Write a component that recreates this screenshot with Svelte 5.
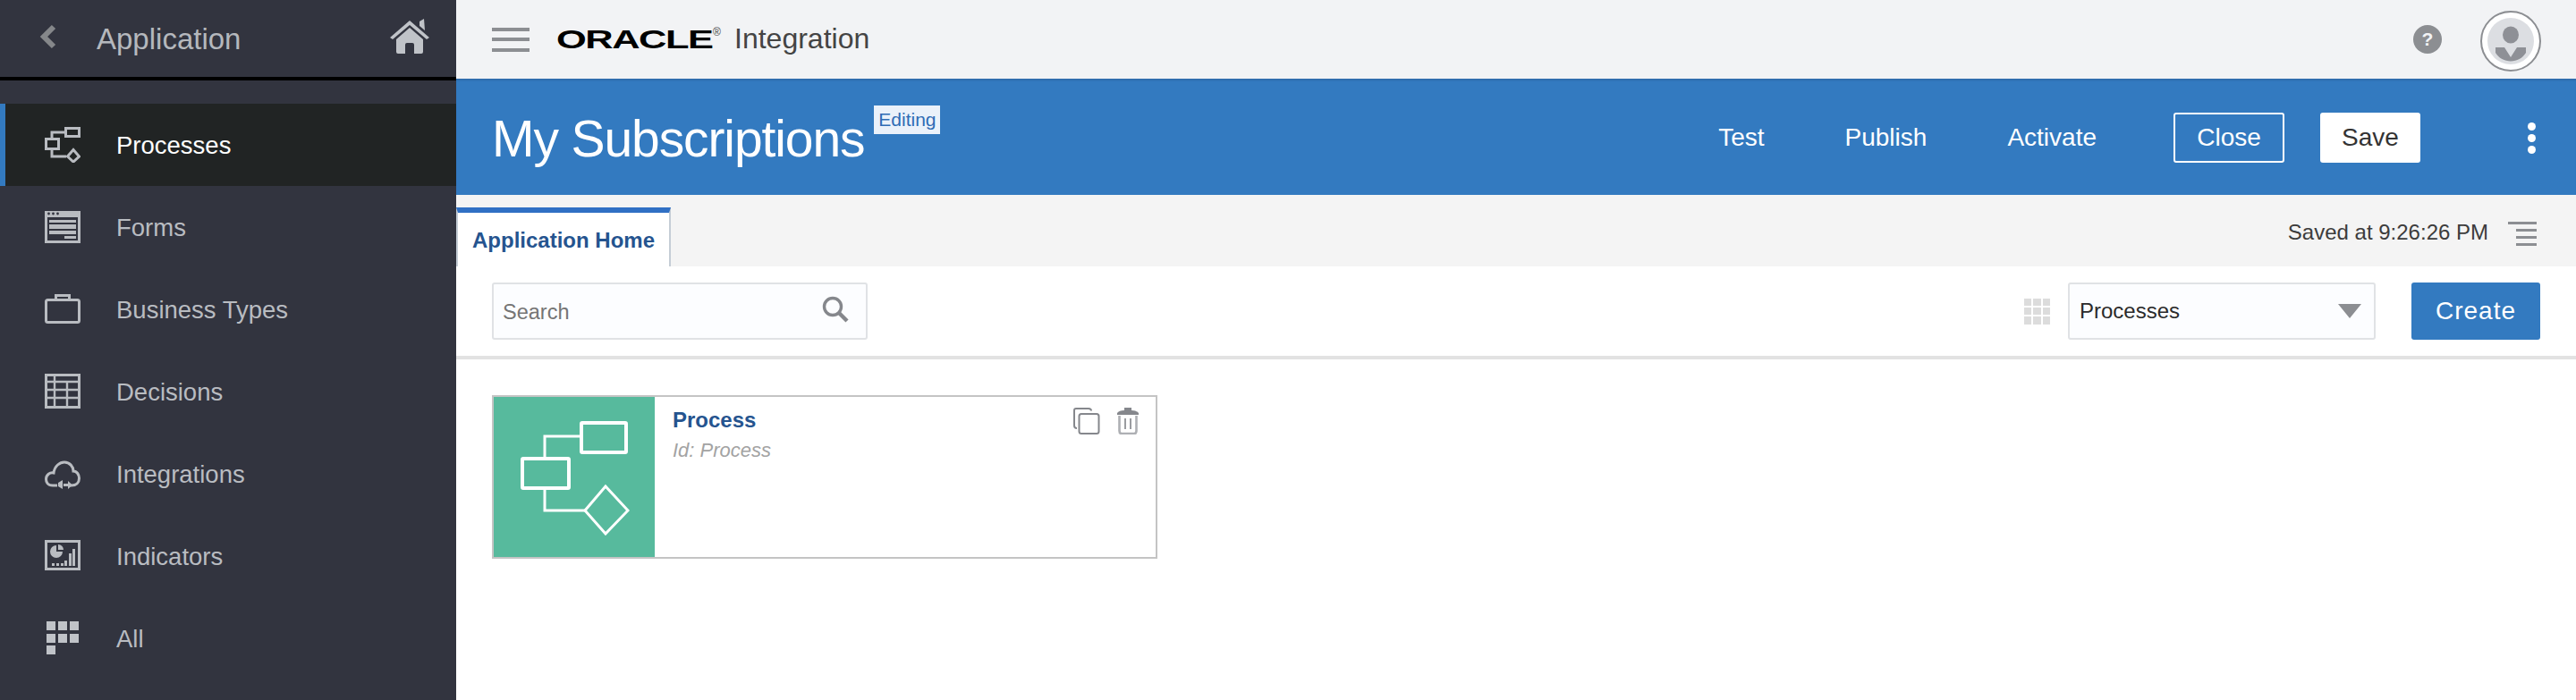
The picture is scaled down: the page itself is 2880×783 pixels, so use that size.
<script>
  const items = ['Processes','Forms','Business Types','Decisions','Integrations','Indicators','All'];
</script>

<div class="page">
  <aside class="side">
    <div class="side-head">
      <svg class="back" width="20" height="28" viewBox="0 0 20 28"><path d="M16 3 L5 14 L16 25" fill="none" stroke="#85878a" stroke-width="6"/></svg>
      <span class="app-name">Application</span>
      <svg class="home" width="44" height="40" viewBox="0 0 44 40"><path d="M0 21 L22 2 L44 21 L41 23 L22 7 L3 23Z M33 3 L38 0 L39 13 L33 8Z" fill="#c0c3c8"/><path d="M7 23 L22 10 L37 23 V37 Q37 39 35 39 H27 V29 Q27 27 25 27 H19 Q17 27 17 29 V39 H9 Q7 39 7 37Z" fill="#c0c3c8"/></svg>
    </div>
    <nav class="nav">
      {#each items as item, i}
        <div class="row" class:active={i === 0}>
          <svg class="ico" width="40" height="40" viewBox="0 0 40 40">
            {#if i === 0}
              <g fill="none" stroke="#b9bcc1" stroke-width="3">
                <rect x="23.5" y="1.5" width="15" height="9"/><rect x="1.5" y="13.5" width="14" height="11"/>
                <path d="M8 13 V6 H23 M8 25 V33 H24"/><path d="M32 25.5 L38.5 33 L32 39 L25.5 33Z"/>
              </g>
            {:else if i === 1}
              <g fill="#b9bcc1">
                <path fill-rule="evenodd" d="M0 2 H40 V38 H0Z M3 9 V35 H37 V9Z"/>
                <rect x="5" y="12" width="30" height="3"/><rect x="5" y="17" width="30" height="5"/><rect x="5" y="24" width="30" height="4"/><rect x="22" y="30" width="13" height="3"/>
              </g>
              <g fill="#32343f"><circle cx="4.5" cy="5" r="1.4"/><circle cx="9.5" cy="5" r="1.4"/><circle cx="14.5" cy="5" r="1.4"/></g>
            {:else if i === 2}
              <g fill="none" stroke="#b9bcc1" stroke-width="3">
                <rect x="1.5" y="9.5" width="37" height="25" rx="2"/><path d="M12.5 9 V4.5 H27.5 V9"/>
              </g>
            {:else if i === 3}
              <g fill="none" stroke="#b9bcc1" stroke-width="2.4">
                <rect x="1.5" y="1.5" width="37" height="36" stroke-width="3"/><path d="M3 9 H37 M3 18 H37 M3 27 H37 M11 3 V37 M25 9 V37"/>
              </g>
            {:else if i === 4}
              <g fill="none" stroke="#b9bcc1" stroke-width="3">
                <path d="M14 33 H9 C3 33 1.5 29 1.5 26 C1.5 21 6 18 10 19 C11 11 17 7 22 7 C28 7 32 12 32 17 C36 17 38.5 21 38.5 25 C38.5 30 35 33 30 33 H26"/>
              </g>
              <path d="M15 30 L20 27 V37 L15 34Z M21 31 H26 V28 L31 32.5 L26 37 V34 H21Z" fill="#b9bcc1"/>
            {:else if i === 5}
              <g fill="#b9bcc1">
                <path fill-rule="evenodd" d="M0 2 H40 V36 H0Z M3 5 V33 H37 V5Z"/>
                <path d="M13 8 A7 7 0 1 0 20 15 H13Z"/><path d="M15 7 A6 6 0 0 1 21 13 H15Z"/>
                <rect x="8" y="28" width="3" height="3"/><rect x="13" y="28" width="3" height="3"/><rect x="18" y="28" width="3" height="3"/><rect x="22" y="25" width="3" height="6"/><rect x="27" y="17" width="3" height="14"/><rect x="31" y="12" width="3" height="19"/>
              </g>
            {:else}
              <g fill="#c0c3c8">
                <rect x="2" y="1" width="10" height="10"/><rect x="15" y="1" width="10" height="10"/><rect x="28" y="1" width="10" height="10"/>
                <rect x="2" y="15" width="10" height="10"/><rect x="15" y="15" width="10" height="10"/><rect x="28" y="15" width="10" height="10"/>
                <rect x="2" y="28" width="10" height="10"/>
              </g>
            {/if}
          </svg>
          <span>{item}</span>
        </div>
      {/each}
    </nav>
  </aside>

  <main class="main">
    <header class="top">
      <div class="burger"><i></i><i></i><i></i></div>
      <span class="logo"><b>ORACLE</b><small>®</small></span>
      <span class="product">Integration</span>
      <svg class="help" width="32" height="32" viewBox="0 0 32 32"><circle cx="16" cy="16" r="16" fill="#8c8e92"/><text x="16" y="23" text-anchor="middle" font-family="Liberation Sans" font-weight="700" font-size="21" fill="#f2f3f5">?</text></svg>
      <svg class="avatar" width="68" height="68" viewBox="0 0 68 68">
        <circle cx="34" cy="34" r="33" fill="#fff" stroke="#8c8e92" stroke-width="2"/>
        <circle cx="34" cy="34" r="26" fill="#dcdee2"/>
        <ellipse cx="34" cy="27" rx="9" ry="9.5" fill="#8e9096"/>
        <path d="M17 41 H27 L34 52 L41 41 H51 V47 A20 20 0 0 1 17 47Z" fill="#8e9096"/>
      </svg>
    </header>

    <section class="band">
      <h1>My Subscriptions</h1>
      <span class="badge">Editing</span>
      <div class="actions">
        <span class="link test">Test</span>
        <span class="link publish">Publish</span>
        <span class="link activate">Activate</span>
        <span class="btn outline">Close</span>
        <span class="btn solid">Save</span>
        <div class="kebab"><i></i><i></i><i></i></div>
      </div>
    </section>

    <div class="tabs">
      <div class="tab">Application Home</div>
      <span class="saved">Saved at 9:26:26 PM</span>
      <div class="lines"><i></i><i></i><i></i><i></i></div>
    </div>

    <div class="toolbar">
      <div class="search">
        <span>Search</span>
        <svg width="30" height="30" viewBox="0 0 30 30"><circle cx="12" cy="12" r="9.5" fill="none" stroke="#85878c" stroke-width="3.4"/><path d="M19 19 L28 28" stroke="#85878c" stroke-width="4.4"/></svg>
      </div>
      <div class="grid-ico">
        {#each Array(9) as _}<i></i>{/each}
      </div>
      <div class="select"><span>Processes</span><em></em></div>
      <div class="create">Create</div>
    </div>

    <div class="content">
      <article class="card">
        <div class="thumb">
          <svg width="122" height="128" viewBox="0 0 122 128" fill="none" stroke="#fff">
            <rect x="68" y="2" width="50" height="33" stroke-width="4" rx="1"/>
            <rect x="2" y="42" width="52" height="33" stroke-width="4" rx="1"/>
            <path d="M27 42 V17 H68 M27 75 V100 H72" stroke-width="3"/>
            <path d="M95 73 L120 100 L95 126 L72 100Z" stroke-width="3"/>
          </svg>
        </div>
        <div class="info">
          <div class="name">Process</div>
          <div class="pid">Id: Process</div>
        </div>
        <div class="card-acts">
          <svg width="30" height="30" viewBox="0 0 30 30" fill="none" stroke="#85878c" stroke-width="2"><path d="M20 3.5 Q20 1 17 1 H3 Q1 1 1 3 V20 Q1 23 4 23"/><rect x="6.5" y="7" width="22" height="22" rx="2.5"/></svg>
          <svg width="26" height="30" viewBox="0 0 26 30"><path d="M1 6 Q3 3 9 3 V0 H17 V3 Q23 3 25 6 V8 H1Z" fill="#85878c"/><path d="M3.5 9 V26 Q3.5 29 6 29 H20 Q22.5 29 22.5 26 V9" fill="none" stroke="#aeb0b4" stroke-width="2.6"/><path d="M10 12 V24 M16 12 V24" stroke="#9a9ca0" stroke-width="2"/></svg>
        </div>
      </article>
    </div>
  </main>
</div>

<style>
  :global(body) { margin: 0; background: #fff; }
  .page { display: flex; width: 2880px; height: 783px; overflow: hidden; font-family: "Liberation Sans", Arial, sans-serif; }
  .side { width: 510px; flex: none; background: #32343f; color: #b9bcc1; }
  .side-head { height: 86px; border-bottom: 4px solid #000; display: flex; align-items: center; padding: 0 30px 0 44px; box-sizing: content-box; width: 436px; }
  .back { flex: none; margin-top: -4px; }
  .app-name { font-size: 33px; margin-left: 44px; flex: 1; color: #b5b8bd; padding-top: 2px; }
  .home { margin-top: -4px; }
  .nav { padding-top: 26px; }
  .row { height: 92px; display: flex; align-items: center; padding-left: 50px; font-size: 27.5px; box-sizing: border-box; }
  .row span { margin-left: 40px; padding-top: 2px; }
  .row.active { background: #212424; color: #fff; box-shadow: inset 6px 0 0 #337ac0; }
  .ico { flex: none; }

  .main { flex: 1; min-width: 0; display: flex; flex-direction: column; }
  .top { height: 88px; flex: none; background: #f2f3f5; display: flex; align-items: center; padding-left: 40px; box-sizing: border-box; }
  .burger { width: 42px; display: flex; flex-direction: column; gap: 7.5px; }
  .burger i { display: block; height: 4px; background: #8c8e92; }
  .logo { display: inline-block; margin-left: 30px; width: 180px; color: #000; position: relative; line-height: 1; white-space: nowrap; }
  .logo b { display: inline-block; font-size: 30px; font-weight: 700; transform: scaleX(1.447); transform-origin: left; letter-spacing: -1px; }
  .logo small { position: absolute; left: 175px; top: 1px; font-size: 12px; color: #444; }
  .product { font-size: 32px; color: #444; margin-left: 19px; margin-right: auto; margin-top: -1px; }
  .help { margin-right: 43px; }
  .avatar { margin-right: 39px; margin-top: 4px; }

  .band { height: 130px; flex: none; background: #337ac0; box-shadow: inset 0 3px 2px -1px #2f6cab; color: #fff; display: flex; padding-left: 40px; box-sizing: border-box; position: relative; }
  h1 { margin: 0; font-size: 57px; font-weight: 400; line-height: 134px; letter-spacing: -1.1px; font-family: "Liberation Sans", Arial, sans-serif; }
  .badge { align-self: flex-start; margin: 30px 0 0 11px; width: 74px; height: 32px; line-height: 32px; text-align: center; font-size: 21px; background: #eaf1fa; color: #2f6cb5; }
  .actions { margin-left: auto; display: flex; align-items: center; font-size: 28px; height: 100%; padding-top: 2px; box-sizing: border-box; }
  .link { white-space: nowrap; }
  .test { margin-right: 90px; }
  .publish { margin-right: 90px; }
  .activate { margin-right: 86px; }
  .btn { height: 56px; display: flex; align-items: center; justify-content: center; border-radius: 3px; box-sizing: border-box; }
  .outline { width: 124px; border: 2px solid #fff; margin-right: 40px; }
  .solid { width: 112px; background: #fff; color: #333; }
  .kebab { width: 12px; margin: 0 44px 0 118px; display: flex; flex-direction: column; gap: 4px; }
  .kebab i { display: block; width: 9px; height: 9px; border-radius: 50%; background: #fff; margin: 0 auto; }

  .tabs { height: 80px; flex: none; background: #f4f4f4; display: flex; align-items: flex-end; box-sizing: border-box; }
  .tab { width: 240px; height: 66px; box-sizing: border-box; background: #fff; border-top: 6px solid #3070c4; border-left: 2px solid #c5cdd6; border-right: 2px solid #c5cdd6; color: #25548f; font-weight: 700; font-size: 24px; padding: 17px 0 0 16px; white-space: nowrap; }
  .saved { align-self: center; margin-left: auto; font-size: 24px; color: #3c3c3c; margin-top: 4px; }
  .lines { align-self: center; margin: 6px 44px 0 22px; width: 32px; display: flex; flex-direction: column; align-items: flex-end; gap: 5px; }
  .lines i { display: block; height: 3px; width: 23px; background: #8c8e92; }
  .lines i:first-child { width: 32px; }

  .toolbar { height: 104px; flex: none; border-bottom: 4px solid #e2e2e2; display: flex; align-items: center; padding: 0 40px; box-sizing: border-box; background: #fff; }
  .search { width: 420px; height: 64px; box-sizing: border-box; border: 2px solid #e0e2e5; border-radius: 3px; background: #fcfdff; display: flex; align-items: center; justify-content: space-between; padding: 0 19px 0 10px; font-size: 23.5px; color: #757575; }
  .search span { padding-top: 2px; }
  .search svg { margin-top: -4px; }
  .grid-ico { margin-left: auto; width: 29px; height: 29px; display: grid; grid-template-columns: repeat(3, 1fr); gap: 2px; }
  .grid-ico i { background: #dcdcdc; }
  .select { width: 344px; height: 64px; margin-left: 20px; box-sizing: border-box; border: 2px solid #e0e2e5; border-radius: 3px; background: #fcfdff; display: flex; align-items: center; justify-content: space-between; padding: 0 14px 0 11px; font-size: 24px; color: #2b2b2b; }
  .select em { width: 0; height: 0; border-left: 13px solid transparent; border-right: 13px solid transparent; border-top: 16px solid #8c8e92; }
  .create { width: 144px; height: 64px; margin-left: 40px; background: #337ac0; color: #fff; border-radius: 3px; display: flex; align-items: center; justify-content: center; font-size: 28px; letter-spacing: 1px; }

  .content { flex: 1; padding: 40px; }
  .card { width: 744px; height: 183px; box-sizing: border-box; border: 2px solid #c4c4c4; display: flex; background: #fff; }
  .thumb { width: 180px; flex: none; background: #57ba9d; display: flex; align-items: center; justify-content: center; }
  .thumb svg { margin-left: 2px; margin-top: 2px; }
  .info { padding: 11px 0 0 20px; flex: 1; }
  .name { font-size: 24px; font-weight: 700; color: #25548f; line-height: 30px; }
  .pid { font-size: 22px; font-style: italic; color: #a3a3a3; line-height: 28px; margin-top: 5px; }
  .card-acts { display: flex; gap: 18px; padding: 12px 18px 0 0; align-items: flex-start; height: fit-content; }
</style>
